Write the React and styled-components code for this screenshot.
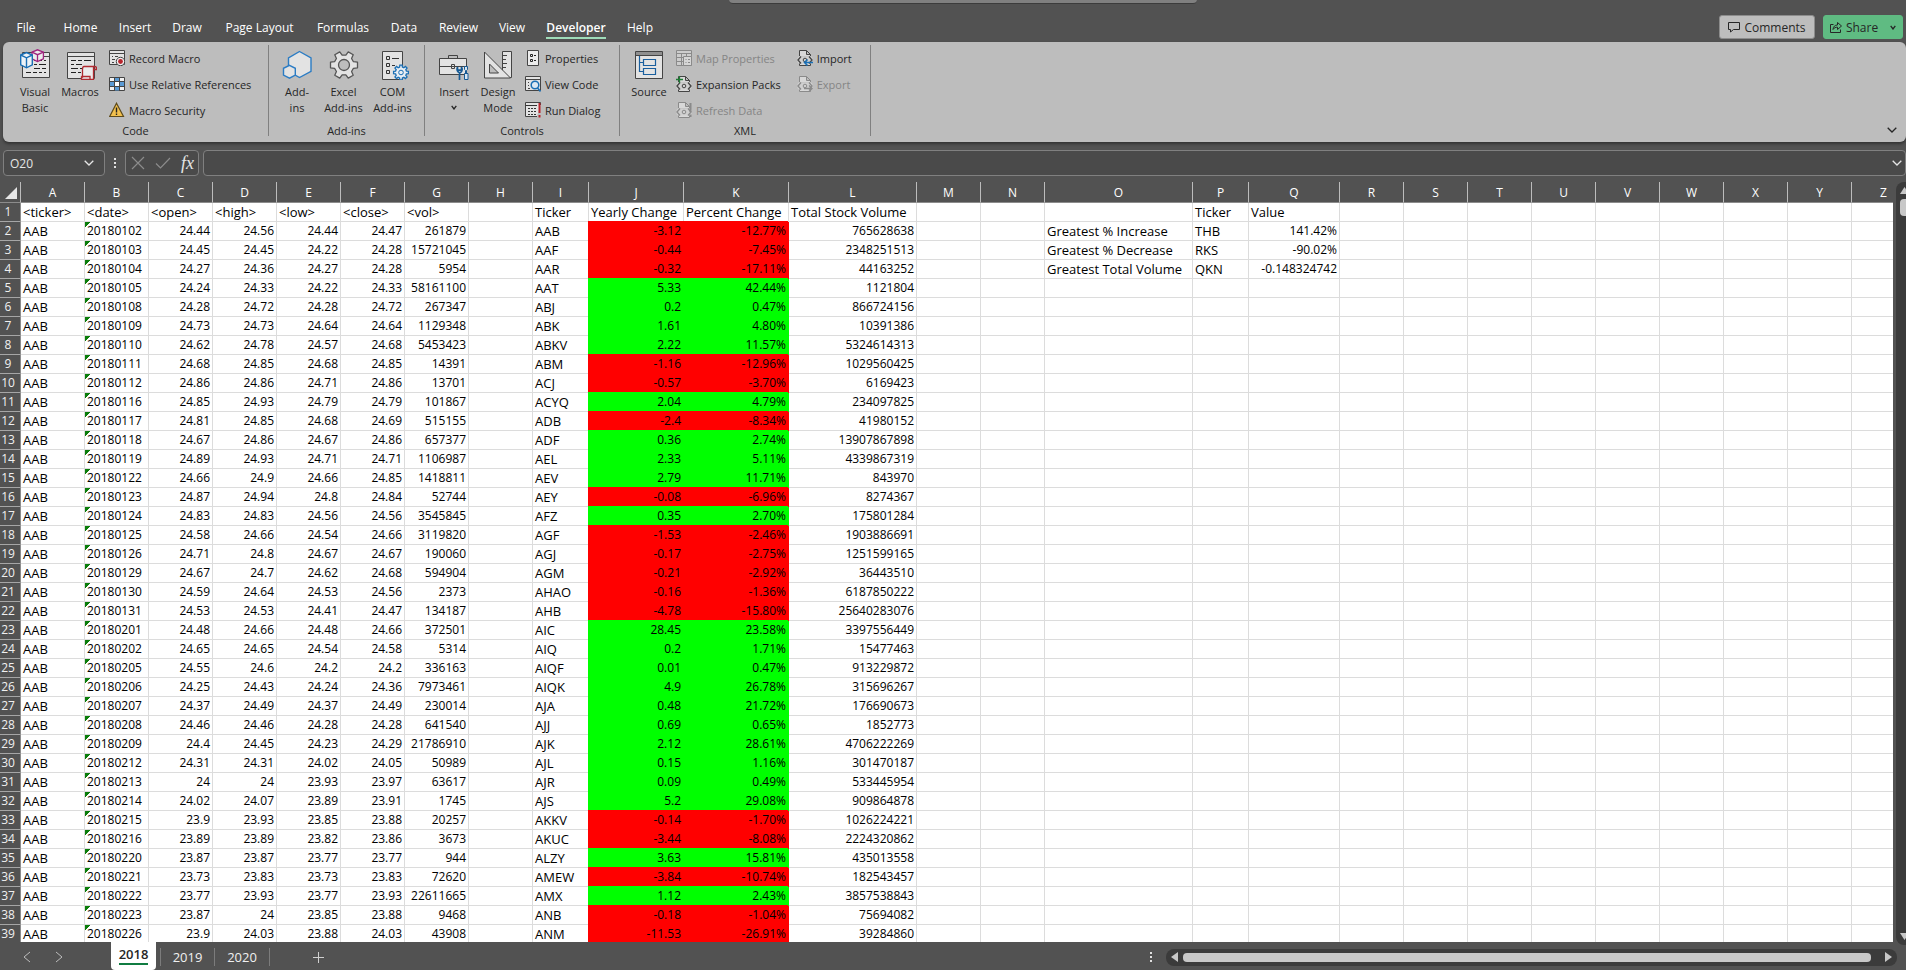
import React from "react";
import styled, { createGlobalStyle } from "styled-components";

const color = {
  chrome: "#525252",
  field: "#4a4a4a",
  ribbon: "#bdbdbd",
  line: "#808080",
  ink: "#262626",
  muted: "#858585",
  grid: "#dcdcdc",
  track: "#3b3b3b",
  thumb: "#c8c8c8",
};

const uiFont = `"Open Sans", "Noto Sans", sans-serif`;
const sheetFont = `"Open Sans", "Noto Sans", sans-serif`;

const GlobalStyle = createGlobalStyle`
  * { box-sizing: border-box; }
  body { margin: 0; background: ${color.chrome}; font-family: ${uiFont}; }
  button, input { font: inherit; color: inherit; }
  button { border: 0; padding: 0; background: none; white-space: nowrap; }
`;

const Page = styled.div`
  display: flex;
  flex-direction: column;
  height: 100vh;
  overflow: hidden;
  background: ${color.chrome};
`;

/* ---------- title strip and menu ---------- */

const SearchStrip = styled.div`
  width: 468px;
  height: 4px;
  flex: none;
  align-self: center;
  margin-left: 20px;
  background: #808080;
  border-bottom: 1px solid #3c3c3c;
  border-radius: 0 0 4px 4px;
`;

const MenuBar = styled.header`
  display: flex;
  flex: none;
  align-items: flex-start;
  height: 38px;
  padding: 11px 3px 0 6px;
`;

const MenuTabs = styled.nav`
  display: flex;
  flex: 1;
`;

const MenuTab = styled.button`
  width: ${(p) => p.$width}px;
  height: 24px;
  font-size: 12px;
  line-height: 24px;
  font-weight: ${(p) => (p.$active ? 600 : 400)};
  color: #fff;
  text-align: center;
`;

const TabText = styled.span`
  display: inline-block;
  height: 24px;
  line-height: 25px;
  border-bottom: 2px solid ${(p) => (p.$active ? "#9fdcb9" : "transparent")};
`;

const MenuActions = styled.div`
  display: flex;
  gap: 8px;
`;

const ActionButton = styled.button`
  display: flex;
  align-items: center;
  justify-content: center;
  gap: 4px;
  width: ${(p) => p.$width}px;
  height: 24px;
  border-radius: 3px;
  font-size: 12px;
  color: ${color.ink};
  background: ${(p) => (p.$green ? "#5fbb82" : "#bdbdbd")};
  border: 1px solid ${(p) => (p.$green ? "#5fbb82" : "#8c8c8c")};
`;

/* ---------- ribbon ---------- */

const Ribbon = styled.section`
  display: flex;
  flex: none;
  height: 100px;
  margin-left: 3px;
  padding: 3px 0 6px;
  border-radius: 6px;
  color: ${color.ink};
  background: ${color.ribbon};
  box-shadow: 0 2px 3px #333;
`;

const Group = styled.section`
  display: flex;
  flex-direction: column;
  width: ${(p) => p.$width}px;
  border-right: 1px solid ${color.line};
`;

const GroupBody = styled.div`
  display: flex;
  flex: none;
  height: 78px;
  padding-left: ${(p) => p.$inset}px;
`;

const GroupName = styled.h2`
  margin: 0;
  height: 12px;
  font-size: 11px;
  line-height: 16px;
  font-weight: 400;
  text-align: center;
`;

const BigButton = styled.button`
  display: flex;
  flex-direction: column;
  align-items: center;
  width: ${(p) => p.$width}px;
  padding-top: 3px;
  font-size: 11px;
  line-height: 16px;
  text-align: center;

  svg { margin-bottom: 4px; }
`;

const Stack = styled.div`
  display: flex;
  flex-direction: column;
  margin-left: ${(p) => p.$gap}px;
`;

const SmallButton = styled.button`
  display: flex;
  align-items: center;
  gap: 4px;
  height: 26px;
  font-size: 11px;
  color: ${color.ink};

  &:disabled { color: ${color.muted}; }
`;

const RibbonToggle = styled.button`
  margin-left: auto;
  align-self: flex-end;
  width: 28px;
  height: 20px;
  color: ${color.ink};
`;

/* ---------- formula bar ---------- */

const FormulaRow = styled.div`
  display: flex;
  flex: none;
  align-items: center;
  height: 26px;
  margin: 8px 0 6px;
  padding-left: 3px;
  color: #e6e6e6;
`;

const Field = styled.div`
  display: flex;
  align-items: center;
  width: ${(p) => p.$width}px;
  flex: ${(p) => (p.$grow ? 1 : "none")};
  height: 26px;
  padding: 0 ${(p) => (p.$grow ? 3 : 10)}px 0 6px;
  border: 1px solid ${color.line};
  border-radius: 4px;
  background: ${color.field};
`;

const FieldInput = styled.input`
  flex: 1;
  min-width: 0;
  padding: 0;
  border: 0;
  outline: 0;
  background: none;
  font-size: 12px;
`;

const DotsSlot = styled.span`
  display: flex;
  justify-content: center;
  width: 20px;
`;

const FormulaTools = styled(Field)`
  justify-content: space-between;
  margin-right: 4px;
  padding: 0 4px 0 5px;

  button { display: flex; }
`;

/* ---------- sheet ---------- */

const SheetArea = styled.main`
  display: flex;
  flex: 1;
  min-height: 0;
`;

const SheetView = styled.div`
  flex: 1;
  min-width: 0;
  overflow: hidden;
  background: #fff;
`;

const Sheet = styled.table`
  width: 1px;
  table-layout: fixed;
  border-collapse: separate;
  border-spacing: 0;
  font-family: ${sheetFont};
  font-size: 13px;
  line-height: 18px;
  color: #000;
`;

const ColumnHead = styled.th`
  height: 21px;
  padding: 1px 0 0;
  font-size: 12px;
  line-height: 18px;
  font-weight: 400;
  color: #fff;
  background: ${color.chrome};
  border-right: 1px solid #bcbcbc;
  border-bottom: 1px solid #8c8c8c;
`;

const Corner = styled(ColumnHead)`
  padding: 0 3px 3px 0;
  text-align: right;
  vertical-align: bottom;

  svg { display: block; margin-left: auto; }
`;

const RowHead = styled.th`
  height: 19px;
  padding: 0 4px 0 0;
  font-size: 12px;
  line-height: 18px;
  font-weight: 400;
  text-align: center;
  color: #f0f0f0;
  background: ${color.chrome};
  border-right: 1px solid #8c8c8c;
  border-bottom: 1px solid #a6a6a6;
`;

const Cell = styled.td`
  height: 19px;
  padding: 0 2px;
  overflow: hidden;
  white-space: nowrap;
  font-size: ${(p) => (p.$number ? 12 : 13)}px;
  text-align: ${(p) => (p.$right ? "right" : "left")};
  background: ${(p) => p.$fill || "#fff"};
  border-right: 1px solid ${(p) => p.$fill || color.grid};
  border-bottom: 1px solid ${(p) => p.$fill || color.grid};
  box-shadow: ${(p) => (p.$fill ? `-1px -1px 0 ${p.$fill}` : "none")};
`;

const FlaggedCell = styled(Cell)`
  background: linear-gradient(135deg, #0a7d0a 4px, #fff 4px);
`;

const VerticalRail = styled.div`
  flex: none;
  width: 13px;
  padding-left: 3px;
  overflow: hidden;
  margin-bottom: -3px;
`;

const VerticalTrack = styled.div`
  display: flex;
  flex-direction: column;
  align-items: center;
  width: 17px;
  height: 100%;
  padding: 5px 0;
  border-radius: 8px;
  background: ${color.track};
`;

const VerticalThumb = styled.div`
  width: 9px;
  height: 17px;
  margin: 5px 0 auto;
  border-radius: 4px;
  background: ${color.thumb};
`;

/* ---------- bottom bar ---------- */

const BottomBar = styled.footer`
  display: flex;
  flex: none;
  align-items: center;
  height: 28px;
  padding: 2px 9px 0 0;
  color: #f0f0f0;
`;

const SheetNav = styled.div`
  display: flex;
  gap: 20px;
  width: 111px;
  padding-left: 21px;
  color: #bdbdbd;
`;

const NavButton = styled.button`
  display: flex;
`;

const SheetTab = styled.button`
  align-self: ${(p) => (p.$active ? "flex-end" : "center")};
  width: ${(p) => (p.$active ? 45 : 55)}px;
  height: ${(p) => (p.$active ? 28 : 18)}px;
  padding-bottom: ${(p) => (p.$active ? 2 : 0)}px;
  margin-right: ${(p) => (p.$active ? 4 : 0)}px;
  border-right: ${(p) => (p.$active ? "0" : "1px solid #7c7c7c")};
  border-left: ${(p) => (p.$first ? "1px solid #7c7c7c" : "0")};
  border-radius: ${(p) => (p.$active ? "0 0 4px 4px" : "0")};
  font-size: 13px;
  line-height: 18px;
  font-weight: ${(p) => (p.$active ? 600 : 400)};
  color: ${(p) => (p.$active ? color.ink : "#f0f0f0")};
  background: ${(p) => (p.$active ? "#fff" : "none")};

  span {
    display: inline-block;
    border-bottom: ${(p) => (p.$active ? "2px solid #107c41" : "0")};
  }
`;

const AddSheet = styled(NavButton)`
  margin: 0 auto 0 42px;
`;

const HorizontalTrack = styled.div`
  display: flex;
  align-items: center;
  width: 39%;
  max-width: 731px;
  height: 17px;
  margin-left: 14px;
  padding: 0 5px;
  border-radius: 8px;
  background: ${color.track};
`;

const HorizontalThumb = styled.div`
  flex: 1;
  height: 9px;
  margin: 0 14px 0 5px;
  border-radius: 4px;
  background: ${color.thumb};
`;

/* ---------- icons ---------- */

const Icon = ({ w = 16, h = w, children, ...rest }) => (
  <svg width={w} height={h} viewBox={`0 0 ${w} ${h}`} fill="none" stroke="#444" aria-hidden="true" {...rest}>
    {children}
  </svg>
);

const Chevron = ({ w = 10, h = 6, ...rest }) => (
  <Icon w={w} h={h} stroke="currentColor" strokeWidth="1.3" {...rest}>
    <path d={`M.7 .8 L${w / 2} ${h - 1} L${w - 0.7} .8`} />
  </Icon>
);

const Triangle = ({ d, w, h }) => (
  <Icon w={w} h={h} stroke="none" fill={color.thumb}>
    <path d={d} />
  </Icon>
);

const VisualBasicIcon = () => (
  <Icon w={32}>
    <path d="M3.5 4.5h27v25h-27z" fill="#e3e3e3" />
    <path d="M24 8.5h6" />
    <path d="M15 12.5h2M19 12.5h4M25 12.5h2M15 16.5h3M20 16.5h7M15 20.5h6M23 20.5h4M7 24.5h5M14 24.5h4M20 24.5h3M25 24.5h2" stroke="#222" />
    <path d="M13 4.2 18.5 1.8 24.4 4.2v6.6l-5.9 2.8-5.5-2.8z" fill="#ececec" stroke="#a0257f" strokeWidth="1.3" />
    <path d="M13 4.2l5.5 2.5 5.9-2.5M18.5 6.7v6.8" stroke="#a0257f" strokeWidth="1.3" />
    <path d="M1.7 7 7.5 4.5 13.3 7v9.8l-5.8 3-5.8-3z" fill="#eef3f7" stroke="#1a6fb5" strokeWidth="1.4" />
    <path d="M1.7 7l5.8 2.8L13.3 7M7.5 9.8v9.8" stroke="#1a6fb5" strokeWidth="1.4" />
  </Icon>
);

const MacrosIcon = () => (
  <Icon w={34} h={32}>
    <path d="M4.5 4.5h27v26h-27z" fill="#e3e3e3" />
    <path d="M4.5 8.5h27" />
    <path d="M8 12.5h5M15 12.5h4M21 12.5h7M8 16.5h3M13 16.5h6M8 20.5h7M17 20.5h2M8 24.5h5M15 24.5h3" stroke="#222" />
    <path d="M19 31.5h11.5v-13h-9.5c-1.5 0-1.5 1.5-1.5 3v7.5h-1v2.5z" fill="#ececec" stroke="#b02a30" strokeWidth="1.3" />
    <path d="M30.5 21.5h3v-2c0-1-2-1-3-1M18.5 28.5h8.5v3" stroke="#b02a30" strokeWidth="1.3" />
  </Icon>
);

const RecordIcon = () => (
  <Icon>
    <path d="M.5.5h15v14H.5z" fill="#e3e3e3" />
    <path d="M.5 3.5h15M3 6.5h1M6 6.5h3M3 9.5h3M3 12.5h2" />
    <circle cx="11.5" cy="11.5" r="4.2" fill="#f0f0f0" />
    <circle cx="11.5" cy="11.5" r="2.4" fill="#b8242c" stroke="none" />
  </Icon>
);

const RelativeIcon = () => (
  <Icon>
    <path d="M.5 1.5h15v13H.5z" fill="#f2f2f2" />
    <path d="M1 5.5h14v4.5H1zM6 2h4v3.5H6zM6 10h4v4.5H6z" fill="#5b9bd5" stroke="none" />
    <path d="M6 5.5h4v4.5H6z" fill="#fff" stroke="none" />
    <path d="M.5 5.5h15M.5 10.5h15M5.5 1.5v13M10.5 1.5v13" />
  </Icon>
);

const WarningIcon = () => (
  <Icon>
    <path d="M7.5 1.2 14.5 14.5H.7z" fill="#f2c04d" stroke="#5e4a1a" strokeWidth="1.2" />
    <path d="M7.5 5.5v5M7.5 11.5v1.5" stroke="#222" strokeWidth="1.4" />
  </Icon>
);

const AddInsIcon = () => (
  <Icon w={32} stroke="#2b7cc4" strokeWidth="1.4">
    <path d="M18.5 3.5 30 9.8v13.5L18.5 29.5 7.5 23.3V9.8z" fill="#e3e3e3" />
    <path d="M8.5 17.3 14.3 20.3v6.8L8.5 30.2l-6-3.1v-6.8z" fill="#e3e3e3" />
  </Icon>
);

const gearPath = (cx, cy, ro, ri, teeth) => {
  const pts = [];
  const step = (Math.PI * 2) / teeth;
  for (let i = 0; i < teeth; i += 1) {
    [[-0.32, ri], [-0.2, ro], [0.2, ro], [0.32, ri]].forEach(([t, r]) => {
      const a = (i + t) * step;
      pts.push(`${(cx + r * Math.cos(a)).toFixed(2)} ${(cy + r * Math.sin(a)).toFixed(2)}`);
    });
  }
  return `M${pts.join("L")}z`;
};

const GearIcon = () => (
  <Icon w={32} stroke="#555" strokeWidth="1.3">
    <path d={gearPath(16, 17, 13.8, 10, 6)} fill="#e3e3e3" strokeLinejoin="round" />
    <circle cx="16" cy="17" r="5.5" fill={color.ribbon} />
  </Icon>
);

const ComIcon = () => (
  <Icon w={32}>
    <path d="M5.5 3.5h20v28h-20z" fill="#e3e3e3" />
    <path d="M9.5 8.5h3v3h-3zM9.5 15.5h3v3h-3zM9.5 22.5h3v3h-3zM15 10.5h7M15 17.5h3" stroke="#333" />
    <path d={gearPath(24, 24.5, 7.5, 5.6, 8)} fill="#e8eef4" stroke="#1a6fb5" strokeWidth="1.3" />
    <circle cx="24" cy="24.5" r="2.3" stroke="#1a6fb5" />
  </Icon>
);

const ToolboxIcon = () => (
  <Icon w={32}>
    <path d="M10.5 10.5v-3h9v3" />
    <path d="M1.5 10.5h27v16h-27z" fill="#e3e3e3" />
    <path d="M1.5 18.5h27M13.5 16.5h3v4h-3z" fill="#e3e3e3" />
    <path d="M21.5 32V24.8c-2-.8-3.2-3-2-5.8v3.2h4V19c1.4 2.8.2 5-1.5 5.8" stroke="#165a94" strokeWidth="1.7" />
    <path d="M26.5 18.5h3v3l-1 1v3M26.5 25.5h3.5v6h-3.5zM26.5 18.5v3l1 1v3" fill="#d6e6f4" stroke="#165a94" />
  </Icon>
);

const DesignIcon = () => (
  <Icon w={32}>
    <path d="M20.5 3.5h9v26h-9z" fill="#e3e3e3" />
    <path d="M21 7.5h4M21 11.5h3M21 15.5h4M21 19.5h3" />
    <path d="M2.5 4v26h26z" fill="#e3e3e3" />
    <path d="M7.5 16v9h9z" fill={color.ribbon} />
  </Icon>
);

const PropertiesIcon = () => (
  <Icon>
    <path d="M2.5.5h11v15h-11z" fill="#ececec" />
    <path d="M5.5 4.5h2v2h-2zM5.5 9.5h2v2h-2zM9 5.5h2M9 10.5h2" stroke="#222" />
  </Icon>
);

const ViewCodeIcon = () => (
  <Icon>
    <path d="M.5.5h15v14H.5z" fill="#e3e3e3" />
    <path d="M.5 3.5h15M3 6.5h1M3 9.5h1M3 12.5h2" />
    <circle cx="10" cy="9" r="3.8" fill="#dbe8f3" stroke="#1a6fb5" strokeWidth="1.5" />
    <path d="M12.5 12l3 3.5" stroke="#1a6fb5" strokeWidth="1.6" />
  </Icon>
);

const RunDialogIcon = () => (
  <Icon>
    <path d="M12 14.5H.5V.5h15V3" fill="#e3e3e3" />
    <path d="M.5 3.5H12M3 6.5h2M6 6.5h2M9 6.5h2M3 9.5h2M6 9.5h2M9 9.5h2M3 12.5h2M6 12.5h2M9 12.5h2" stroke="#333" />
    <path d="M14.5 1v10M14.5 13v2.5" stroke="#b8242c" strokeWidth="2" />
  </Icon>
);

const SourceIcon = () => (
  <Icon w={32}>
    <path d="M2.5 3.5h27v27h-27z" fill="#e3e3e3" />
    <path d="M3 4h26v3H3z" fill="#8f8f8f" stroke="none" />
    <path d="M2.5 7.5h27" />
    <path d="M10.5 11.5h12v6h-12zM10.5 20.5h12v6h-12zM6.5 8v15.5h4M6.5 14.5h4" stroke="#1a5f9e" strokeWidth="1.2" />
  </Icon>
);

const MapIcon = () => (
  <Icon stroke="#8a8a8a">
    <path d="M.5.5h15v15H.5z" fill="#cdcdcd" />
    <path d="M.5 3.5h15M.5 7.5h7M.5 11.5h7M5.5 3.5v12M10.5 3.5v3" />
    <path d="M7.5 6.5h8v9h-8z" fill="#d6d6d6" />
    <path d="M9.5 9.5h1M12 9.5h2M9.5 12.5h1M12 12.5h2" />
  </Icon>
);

const XmlFile = ({ tone = "#444" }) => (
  <g stroke={tone}>
    <path d="M2.5 6V.5h7l4 4V6M9.5.5v4h4" fill="#d8d8d8" />
    <path d="M2.5 13v2.5h11V13" fill="#d8d8d8" />
    <rect x=".5" y="6.5" width="15" height="7" rx="2" fill="#d0d0d0" stroke="none" />
    <path d="M4 6.5 1 10l3 3.5M12 6.5 15 10l-3 3.5" strokeWidth="1.3" />
    <circle cx="8" cy="10" r="1.8" />
  </g>
);

const ExpansionIcon = () => (
  <Icon>
    <XmlFile />
    <path d="M3.5 0v7M0 3.5h7" stroke="#1e7b34" strokeWidth="1.3" />
  </Icon>
);

const RefreshIcon = () => (
  <Icon>
    <XmlFile tone="#8a8a8a" />
    <path d="M14.5 1v9M14.5 12.5V15" stroke="#8a8a8a" strokeWidth="2" />
  </Icon>
);

const ImportIcon = () => (
  <Icon>
    <XmlFile />
    <path d="M16 12.5H7.5M10.5 9.5l-3 3 3 3" stroke="#1a6fb5" strokeWidth="1.5" />
  </Icon>
);

const ExportIcon = () => (
  <Icon>
    <XmlFile tone="#8a8a8a" />
    <path d="M7 12.5h8M12 9.5l3 3-3 3" stroke="#8a8a8a" strokeWidth="1.4" />
  </Icon>
);

const CommentIcon = () => (
  <Icon w={12} h={12} stroke={color.ink}>
    <path d="M.5 1.5h11v7H5.5l-3 2.5V8.5h-2z" />
  </Icon>
);

const ShareIcon = () => (
  <Icon w={12} h={12} stroke={color.ink}>
    <path d="M3.5 3.5h-3v8h10v-3M3 8.5c.2-3 2-4.5 4.5-4.5V1.5l4 3.5-4 3.5V6.2C5.5 6 4 7 3 8.5z" />
  </Icon>
);

const CancelIcon = () => (
  <Icon w={14} h={14} stroke="#8c8c8c" strokeWidth="1.2">
    <path d="M1 1l12 12M13 1L1 13" />
  </Icon>
);

const AcceptIcon = () => (
  <Icon w={16} h={14} stroke="#8c8c8c" strokeWidth="1.2">
    <path d="M1 7.5l4.5 4.5L15 2" />
  </Icon>
);

const FunctionMark = styled.span`
  font-family: "Liberation Serif", serif;
  font-size: 18px;
  line-height: 20px;
  font-style: italic;
`;

const DotsIcon = () => (
  <Icon w={2} h={12} stroke="none" fill="#e0e0e0">
    <path d="M0 1h2v2H0zM0 5h2v2H0zM0 9h2v2H0z" />
  </Icon>
);

/* ---------- data ---------- */

const menu = [
  ["File", 40], ["Home", 69], ["Insert", 40], ["Draw", 64], ["Page Layout", 81],
  ["Formulas", 86], ["Data", 36], ["Review", 73], ["View", 34], ["Developer", 94], ["Help", 34],
];

const columns = [
  ["A", 64], ["B", 64], ["C", 64], ["D", 64], ["E", 64], ["F", 64], ["G", 64], ["H", 64],
  ["I", 56], ["J", 95], ["K", 105], ["L", 128], ["M", 64], ["N", 64], ["O", 148], ["P", 56],
  ["Q", 91], ["R", 64], ["S", 64], ["T", 64], ["U", 64], ["V", 64], ["W", 64], ["X", 64],
  ["Y", 64], ["Z", 64],
];

const headings = {
  A: "<ticker>", B: "<date>", C: "<open>", D: "<high>", E: "<low>", F: "<close>", G: "<vol>",
  I: "Ticker", J: "Yearly Change", K: "Percent Change", L: "Total Stock Volume",
  P: "Ticker", Q: "Value",
};

const quotes = `20180102 24.44 24.56 24.44 24.47 261879 AAB -3.12 -12.77% 765628638
20180103 24.45 24.45 24.22 24.28 15721045 AAF -0.44 -7.45% 2348251513
20180104 24.27 24.36 24.27 24.28 5954 AAR -0.32 -17.11% 44163252
20180105 24.24 24.33 24.22 24.33 58161100 AAT 5.33 42.44% 1121804
20180108 24.28 24.72 24.28 24.72 267347 ABJ 0.2 0.47% 866724156
20180109 24.73 24.73 24.64 24.64 1129348 ABK 1.61 4.80% 10391386
20180110 24.62 24.78 24.57 24.68 5453423 ABKV 2.22 11.57% 5324614313
20180111 24.68 24.85 24.68 24.85 14391 ABM -1.16 -12.96% 1029560425
20180112 24.86 24.86 24.71 24.86 13701 ACJ -0.57 -3.70% 6169423
20180116 24.85 24.93 24.79 24.79 101867 ACYQ 2.04 4.79% 234097825
20180117 24.81 24.85 24.68 24.69 515155 ADB -2.4 -8.34% 41980152
20180118 24.67 24.86 24.67 24.86 657377 ADF 0.36 2.74% 13907867898
20180119 24.89 24.93 24.71 24.71 1106987 AEL 2.33 5.11% 4339867319
20180122 24.66 24.9 24.66 24.85 1418811 AEV 2.79 11.71% 843970
20180123 24.87 24.94 24.8 24.84 52744 AEY -0.08 -6.96% 8274367
20180124 24.83 24.83 24.56 24.56 3545845 AFZ 0.35 2.70% 175801284
20180125 24.58 24.66 24.54 24.66 3119820 AGF -1.53 -2.46% 1903886691
20180126 24.71 24.8 24.67 24.67 190060 AGJ -0.17 -2.75% 1251599165
20180129 24.67 24.7 24.62 24.68 594904 AGM -0.21 -2.92% 36443510
20180130 24.59 24.64 24.53 24.56 2373 AHAO -0.16 -1.36% 6187850222
20180131 24.53 24.53 24.41 24.47 134187 AHB -4.78 -15.80% 25640283076
20180201 24.48 24.66 24.48 24.66 372501 AIC 28.45 23.58% 3397556449
20180202 24.65 24.65 24.54 24.58 5314 AIQ 0.2 1.71% 15477463
20180205 24.55 24.6 24.2 24.2 336163 AIQF 0.01 0.47% 913229872
20180206 24.25 24.43 24.24 24.36 7973461 AIQK 4.9 26.78% 315696267
20180207 24.37 24.49 24.37 24.49 230014 AJA 0.48 21.72% 176690673
20180208 24.46 24.46 24.28 24.28 641540 AJJ 0.69 0.65% 1852773
20180209 24.4 24.45 24.23 24.29 21786910 AJK 2.12 28.61% 4706222269
20180212 24.31 24.31 24.02 24.05 50989 AJL 0.15 1.16% 301470187
20180213 24 24 23.93 23.97 63617 AJR 0.09 0.49% 533445954
20180214 24.02 24.07 23.89 23.91 1745 AJS 5.2 29.08% 909864878
20180215 23.9 23.93 23.85 23.88 20257 AKKV -0.14 -1.70% 1026224221
20180216 23.89 23.89 23.82 23.86 3673 AKUC -3.44 -8.08% 2224320862
20180220 23.87 23.87 23.77 23.77 944 ALZY 3.63 15.81% 435013558
20180221 23.73 23.83 23.73 23.83 72620 AMEW -3.84 -10.74% 182543457
20180222 23.77 23.93 23.77 23.93 22611665 AMX 1.12 2.43% 3857538843
20180223 23.87 24 23.85 23.88 9468 ANB -0.18 -1.04% 75694082
20180226 23.9 24.03 23.88 24.03 43908 ANM -11.53 -26.91% 39284860`
  .split("\n")
  .map((line) => {
    const [B, C, D, E, F, G, I, J, K, L] = line.split(" ");
    return { A: "AAB", B, C, D, E, F, G, I, J, K, L };
  });

const summary = [
  { O: "Greatest % Increase", P: "THB", Q: "141.42%" },
  { O: "Greatest % Decrease", P: "RKS", Q: "-90.02%" },
  { O: "Greatest Total Volume", P: "QKN", Q: "-0.148324742" },
];

const rows = [headings, ...quotes.map((quote, i) => ({ ...quote, ...summary[i] }))];

const SheetCell = ({ column, row, isHeading }) => {
  const value = row[column] || "";
  if (isHeading || !value) return <Cell>{value}</Cell>;
  if (column === "B") return <FlaggedCell $number>{value}</FlaggedCell>;
  if ("AIOP".includes(column)) return <Cell>{value}</Cell>;
  const changed = column === "J" || column === "K";
  const fill = changed ? (row.J.startsWith("-") ? "#ff0000" : "#00ff00") : undefined;
  return <Cell $number $right $fill={fill}>{value}</Cell>;
};

const Big = ({ width, icon, lines, children }) => (
  <BigButton type="button" $width={width}>
    {icon}
    {lines.map((line) => <span key={line}>{line}</span>)}
    {children}
  </BigButton>
);

const Small = ({ icon, label, disabled }) => (
  <SmallButton type="button" disabled={disabled}>
    {icon}
    {label}
  </SmallButton>
);

export default function App() {
  return (
    <Page>
      <GlobalStyle />
      <SearchStrip />
      <MenuBar>
        <MenuTabs>
          {menu.map(([name, width]) => (
            <MenuTab key={name} type="button" $width={width} $active={name === "Developer"}>
              <TabText $active={name === "Developer"}>{name}</TabText>
            </MenuTab>
          ))}
        </MenuTabs>
        <MenuActions>
          <ActionButton type="button" $width={96}><CommentIcon />Comments</ActionButton>
          <ActionButton type="button" $width={80} $green>
            <ShareIcon />Share<Chevron w={6} h={5} style={{ marginLeft: 8 }} />
          </ActionButton>
        </MenuActions>
      </MenuBar>

      <Ribbon>
        <Group $width={266}>
          <GroupBody $inset={9}>
            <Big width={46} icon={<VisualBasicIcon />} lines={["Visual", "Basic"]} />
            <Big width={44} icon={<MacrosIcon />} lines={["Macros"]} />
            <Stack $gap={7}>
              <Small icon={<RecordIcon />} label="Record Macro" />
              <Small icon={<RelativeIcon />} label="Use Relative References" />
              <Small icon={<WarningIcon />} label="Macro Security" />
            </Stack>
          </GroupBody>
          <GroupName>Code</GroupName>
        </Group>
        <Group $width={156}>
          <GroupBody $inset={6}>
            <Big width={44} icon={<AddInsIcon />} lines={["Add-", "ins"]} />
            <Big width={49} icon={<GearIcon />} lines={["Excel", "Add-ins"]} />
            <Big width={49} icon={<ComIcon />} lines={["COM", "Add-ins"]} />
          </GroupBody>
          <GroupName>Add-ins</GroupName>
        </Group>
        <Group $width={195}>
          <GroupBody $inset={8}>
            <Big width={42} icon={<ToolboxIcon />} lines={["Insert"]}>
              <Chevron w={6} h={5} style={{ marginTop: 5 }} />
            </Big>
            <Big width={46} icon={<DesignIcon />} lines={["Design", "Mode"]} />
            <Stack $gap={4}>
              <Small icon={<PropertiesIcon />} label="Properties" />
              <Small icon={<ViewCodeIcon />} label="View Code" />
              <Small icon={<RunDialogIcon />} label="Run Dialog" />
            </Stack>
          </GroupBody>
          <GroupName>Controls</GroupName>
        </Group>
        <Group $width={251}>
          <GroupBody $inset={8}>
            <Big width={42} icon={<SourceIcon />} lines={["Source"]} />
            <Stack $gap={6}>
              <Small icon={<MapIcon />} label="Map Properties" disabled />
              <Small icon={<ExpansionIcon />} label="Expansion Packs" />
              <Small icon={<RefreshIcon />} label="Refresh Data" disabled />
            </Stack>
            <Stack $gap={16}>
              <Small icon={<ImportIcon />} label="Import" />
              <Small icon={<ExportIcon />} label="Export" disabled />
            </Stack>
          </GroupBody>
          <GroupName>XML</GroupName>
        </Group>
        <RibbonToggle type="button" aria-label="Ribbon display options"><Chevron /></RibbonToggle>
      </Ribbon>

      <FormulaRow>
        <Field $width={102}>
          <FieldInput aria-label="Name box" defaultValue="O20" />
          <Chevron />
        </Field>
        <DotsSlot><DotsIcon /></DotsSlot>
        <FormulaTools $width={74}>
          <button type="button" aria-label="Cancel"><CancelIcon /></button>
          <button type="button" aria-label="Enter"><AcceptIcon /></button>
          <button type="button" aria-label="Insert function"><FunctionMark>fx</FunctionMark></button>
        </FormulaTools>
        <Field $grow>
          <FieldInput aria-label="Formula bar" />
          <Chevron />
        </Field>
      </FormulaRow>

      <SheetArea>
        <SheetView>
          <Sheet>
            <colgroup>
              <col width="21" />
              {columns.map(([name, width]) => <col key={name} width={width} />)}
            </colgroup>
            <thead>
              <tr>
                <Corner aria-label="Select all">
                  <Icon w={12} h={12} stroke="none" fill="#e6e6e6"><path d="M12 0v12H0z" /></Icon>
                </Corner>
                {columns.map(([name]) => <ColumnHead key={name} scope="col">{name}</ColumnHead>)}
              </tr>
            </thead>
            <tbody>
              {rows.map((row, i) => (
                <tr key={i}>
                  <RowHead scope="row">{i + 1}</RowHead>
                  {columns.map(([name]) => (
                    <SheetCell key={name} column={name} row={row} isHeading={i === 0} />
                  ))}
                </tr>
              ))}
            </tbody>
          </Sheet>
        </SheetView>
        <VerticalRail>
          <VerticalTrack>
            <Triangle w={9} h={7} d="M4.5 0 9 7H0z" />
            <VerticalThumb />
            <Triangle w={9} h={7} d="M4.5 7 9 0H0z" />
          </VerticalTrack>
        </VerticalRail>
      </SheetArea>

      <BottomBar>
        <SheetNav>
          <NavButton type="button" aria-label="Previous sheet">
            <Icon w={12} h={12} stroke="currentColor"><path d="M9 1 3 6l6 5" /></Icon>
          </NavButton>
          <NavButton type="button" aria-label="Next sheet">
            <Icon w={12} h={12} stroke="currentColor"><path d="M3 1l6 5-6 5" /></Icon>
          </NavButton>
        </SheetNav>
        <SheetTab type="button" $active><span>2018</span></SheetTab>
        <SheetTab type="button" $first>2019</SheetTab>
        <SheetTab type="button">2020</SheetTab>
        <AddSheet type="button" aria-label="New sheet">
          <Icon w={12} h={12} stroke="#d0d0d0"><path d="M6.5 1v11M1 6.5h11" /></Icon>
        </AddSheet>
        <DotsIcon />
        <HorizontalTrack>
          <Triangle w={7} h={10} d="M7 0v10L0 5z" />
          <HorizontalThumb />
          <Triangle w={7} h={10} d="M0 0v10l7-5z" />
        </HorizontalTrack>
      </BottomBar>
    </Page>
  );
}
